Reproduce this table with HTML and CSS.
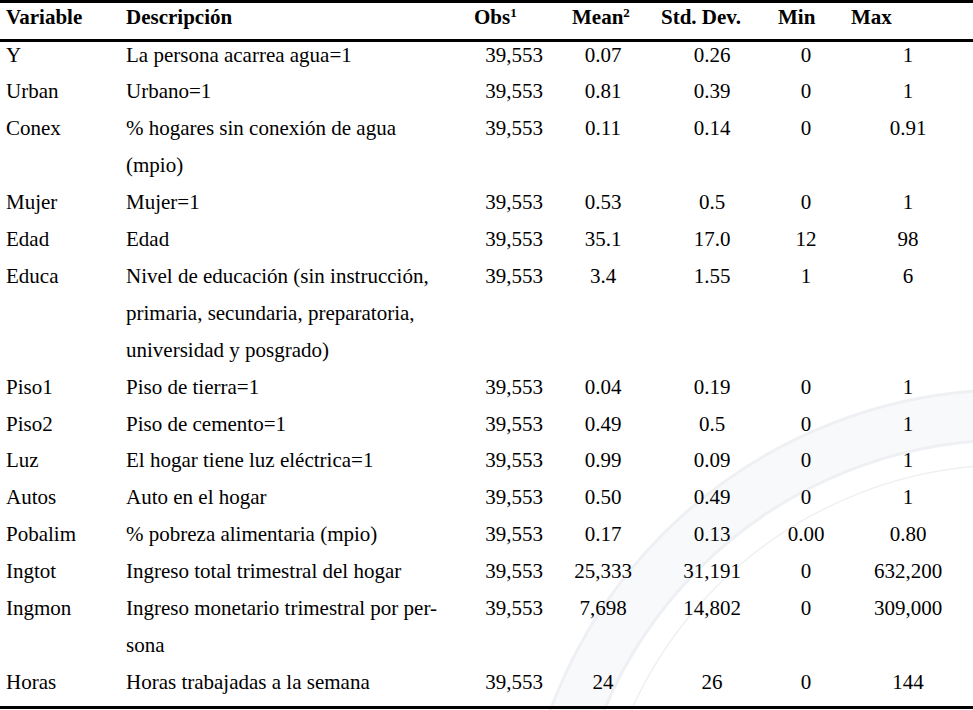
FILE: index.html
```html
<!DOCTYPE html>
<html>
<head>
<meta charset="utf-8">
<link rel="stylesheet" href="styles.css">
</head>
<body>
<div class="page">
  <svg class="seal" viewBox="0 0 973 710" width="973" height="710" aria-hidden="true">
    <path class="band" fill-rule="evenodd" d="M520 880a490 490 0 1 0 980 0a490 490 0 1 0 -980 0z M570 880a440 440 0 1 0 880 0a440 440 0 1 0 -880 0z"/>
    <circle class="ring" cx="1010" cy="880" r="490"/>
    <circle class="ring" cx="1010" cy="880" r="440"/>
    <circle class="ring thin" cx="1010" cy="880" r="415"/>
  </svg>
  <div class="stats">
    <div class="head">
      <p class="hc">Variable</p>
      <p class="hc">Descripción</p>
      <p class="hc">Obs<sup>1</sup></p>
      <p class="hc">Mean<sup>2</sup></p>
      <p class="hc">Std. Dev.</p>
      <p class="hc">Min</p>
      <p class="hc">Max</p>
    </div>
    <div class="body">
      <p class="c">Y</p><p class="c">La persona acarrea agua=1</p><p class="n obs">39,553</p><p class="n mean">0.07</p><p class="n sd">0.26</p><p class="n min">0</p><p class="n max">1</p>
      <p class="c">Urban</p><p class="c">Urbano=1</p><p class="n obs">39,553</p><p class="n mean">0.81</p><p class="n sd">0.39</p><p class="n min">0</p><p class="n max">1</p>
      <p class="c">Conex</p><p class="c">% hogares sin conexión de agua<br>(mpio)</p><p class="n obs">39,553</p><p class="n mean">0.11</p><p class="n sd">0.14</p><p class="n min">0</p><p class="n max">0.91</p>
      <p class="c">Mujer</p><p class="c">Mujer=1</p><p class="n obs">39,553</p><p class="n mean">0.53</p><p class="n sd">0.5</p><p class="n min">0</p><p class="n max">1</p>
      <p class="c">Edad</p><p class="c">Edad</p><p class="n obs">39,553</p><p class="n mean">35.1</p><p class="n sd">17.0</p><p class="n min">12</p><p class="n max">98</p>
      <p class="c">Educa</p><p class="c">Nivel de educación (sin instrucción,<br>primaria, secundaria, preparatoria,<br>universidad y posgrado)</p><p class="n obs">39,553</p><p class="n mean">3.4</p><p class="n sd">1.55</p><p class="n min">1</p><p class="n max">6</p>
      <p class="c">Piso1</p><p class="c">Piso de tierra=1</p><p class="n obs">39,553</p><p class="n mean">0.04</p><p class="n sd">0.19</p><p class="n min">0</p><p class="n max">1</p>
      <p class="c">Piso2</p><p class="c">Piso de cemento=1</p><p class="n obs">39,553</p><p class="n mean">0.49</p><p class="n sd">0.5</p><p class="n min">0</p><p class="n max">1</p>
      <p class="c">Luz</p><p class="c">El hogar tiene luz eléctrica=1</p><p class="n obs">39,553</p><p class="n mean">0.99</p><p class="n sd">0.09</p><p class="n min">0</p><p class="n max">1</p>
      <p class="c">Autos</p><p class="c">Auto en el hogar</p><p class="n obs">39,553</p><p class="n mean">0.50</p><p class="n sd">0.49</p><p class="n min">0</p><p class="n max">1</p>
      <p class="c">Pobalim</p><p class="c">% pobreza alimentaria (mpio)</p><p class="n obs">39,553</p><p class="n mean">0.17</p><p class="n sd">0.13</p><p class="n min">0.00</p><p class="n max">0.80</p>
      <p class="c">Ingtot</p><p class="c">Ingreso total trimestral del hogar</p><p class="n obs">39,553</p><p class="n mean">25,333</p><p class="n sd">31,191</p><p class="n min">0</p><p class="n max">632,200</p>
      <p class="c">Ingmon</p><p class="c">Ingreso monetario trimestral por per-<br>sona</p><p class="n obs">39,553</p><p class="n mean">7,698</p><p class="n sd">14,802</p><p class="n min">0</p><p class="n max">309,000</p>
      <p class="c">Horas</p><p class="c">Horas trabajadas a la semana</p><p class="n obs">39,553</p><p class="n mean">24</p><p class="n sd">26</p><p class="n min">0</p><p class="n max">144</p>
    </div>
  </div>
</div>
</body>
</html>
```
FILE: styles.css
```css
body {
  margin: 0;
  padding: 0;
  background: #ffffff;
  font-family: "Liberation Serif", serif;
  font-size: 21px;
  color: #000;
}
.page {
  position: relative;
  width: 973px;
  height: 710px;
}
.seal {
  position: absolute;
  left: 0;
  top: 0;
}
.seal .band {
  fill: #f8f9fa;
}
.seal .ring {
  fill: none;
  stroke: #eef0f3;
  stroke-width: 3;
}
.seal .ring.thin {
  stroke-width: 1.5;
}
.stats {
  position: relative;
}
.head, .body {
  display: grid;
  grid-template-columns: 120px 348px 98px 89px 117px 73px 128px;
}
.head {
  border-top: 3px solid #000;
  border-bottom: 3px solid #000;
}
.hc {
  margin: 0;
  font-weight: bold;
  line-height: 24px;
  padding: 2px 0 10px 6px;
  white-space: nowrap;
}
.hc sup {
  font-size: 0.62em;
  line-height: 0;
  vertical-align: 0.55em;
}
.body {
  margin-top: -5.5px;
  padding-bottom: 5.5px;
  border-bottom: 3px solid #000;
  line-height: 36.9px;
}
.c, .n {
  margin: 0;
  padding-left: 6px;
  white-space: nowrap;
}
.n {
  text-align: center;
}
.obs { padding-right: 12px; }
.mean { padding-right: 21px; }
.sd { padding-right: 9px; }
.min { padding-right: 11px; }
.max { padding-right: 8px; }
```
